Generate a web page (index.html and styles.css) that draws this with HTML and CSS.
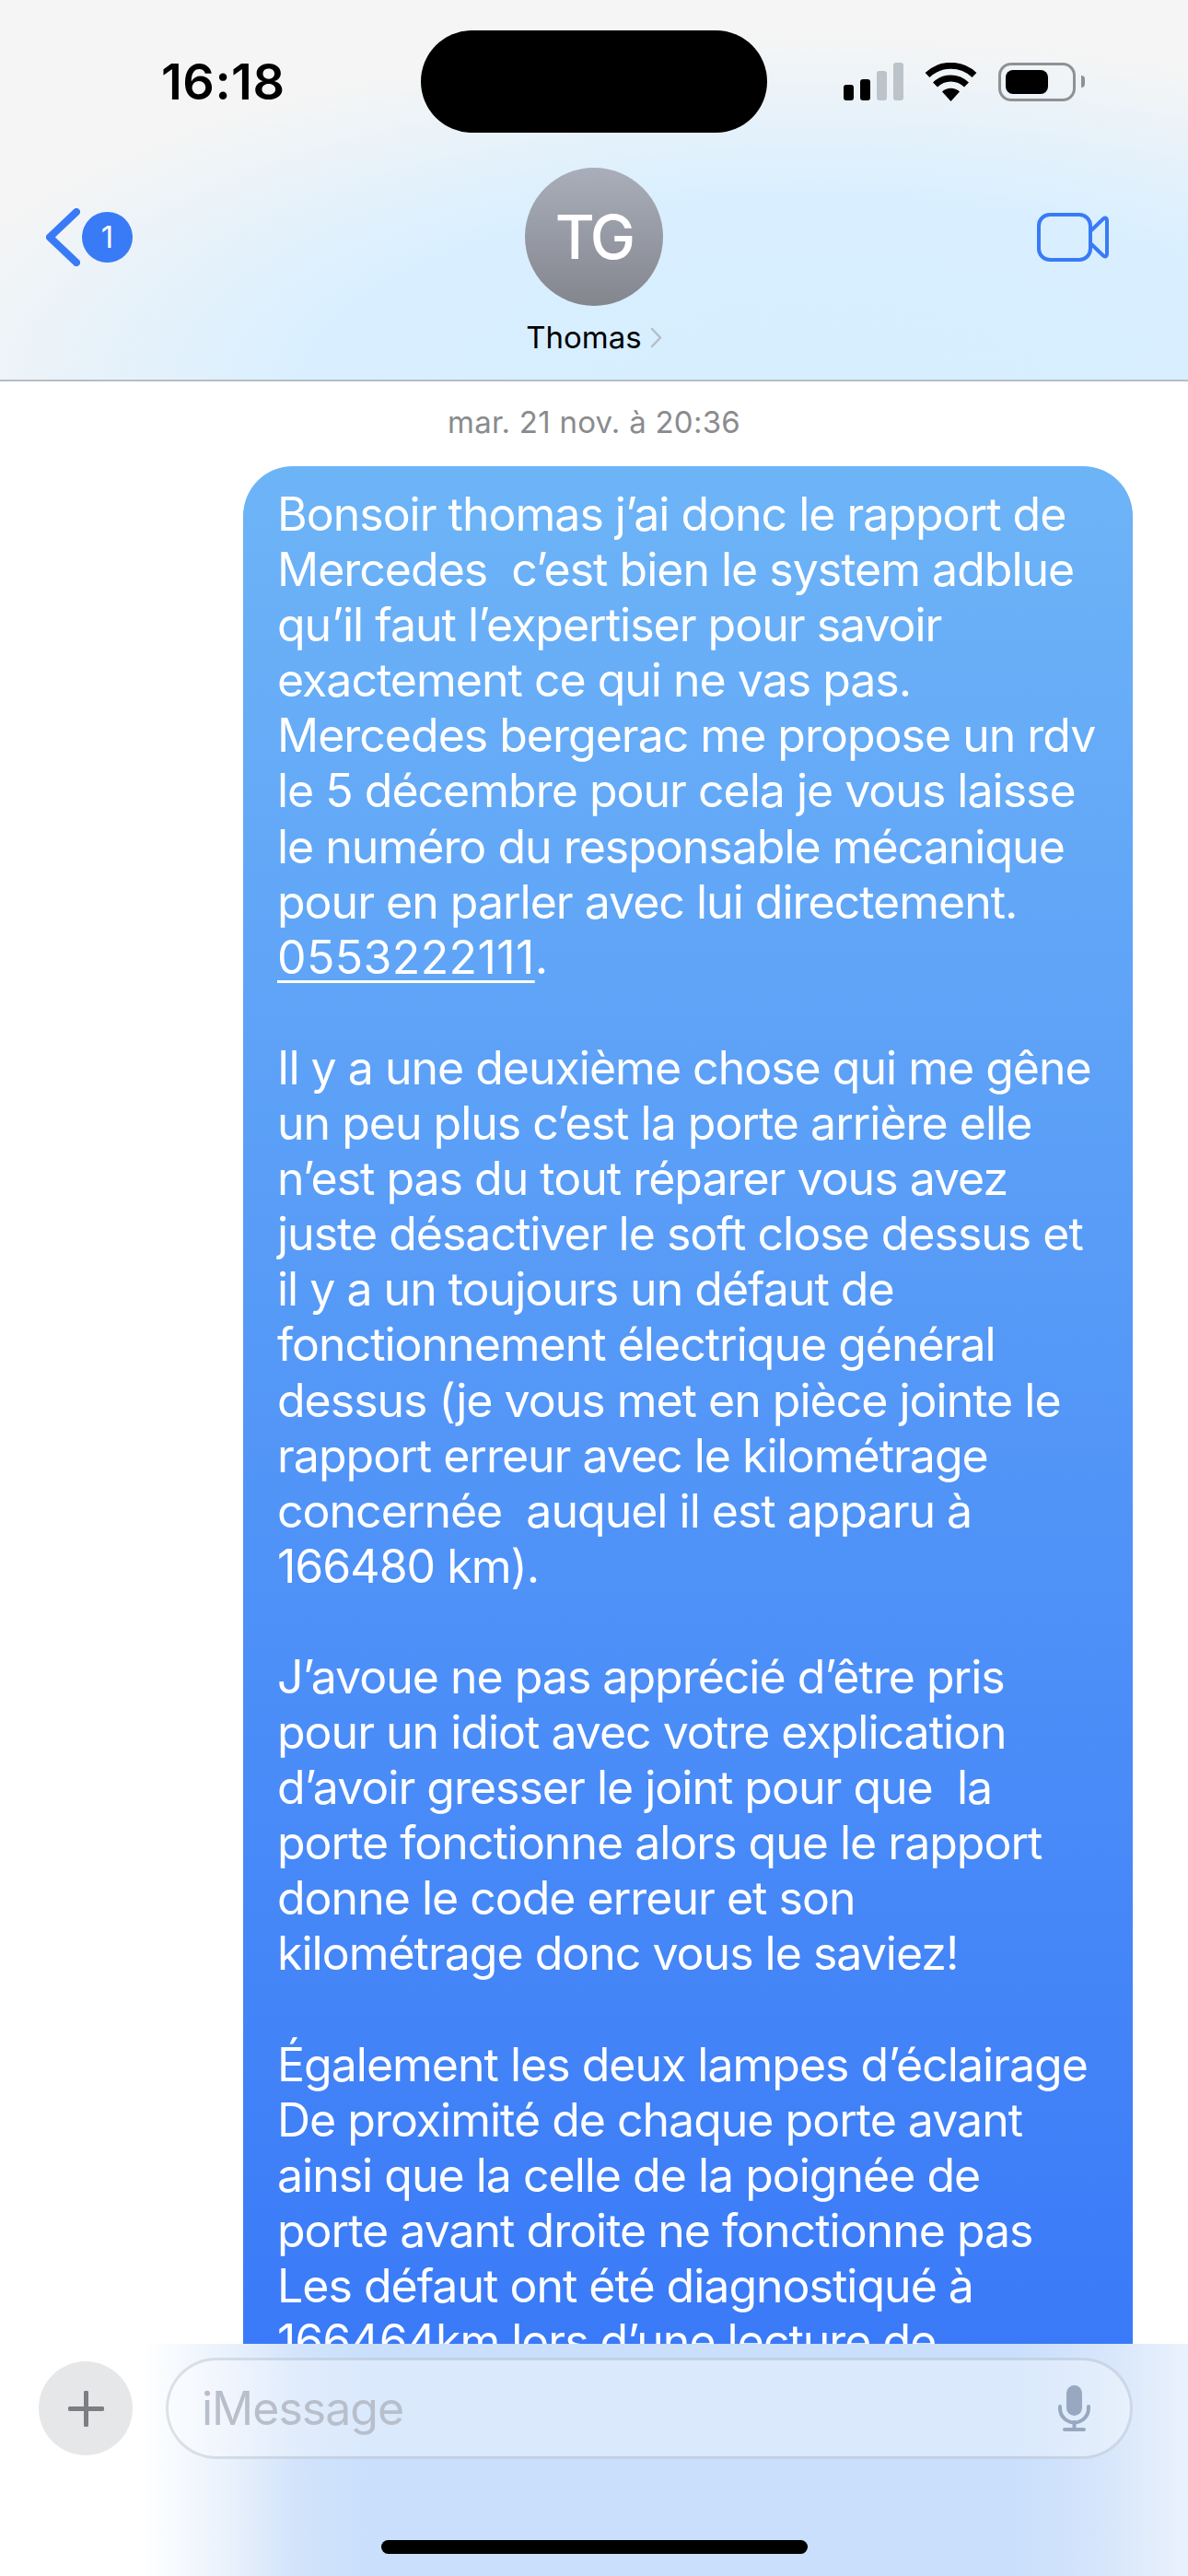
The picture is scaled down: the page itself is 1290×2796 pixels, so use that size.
FILE: index.html
```html
<!DOCTYPE html>
<html lang="fr">
<head>
    <meta charset="UTF-8">
    <meta name="viewport" content="width=device-width, initial-scale=1.0">
    <title>Thomas</title>
    <link rel="stylesheet" href="styles.css">
</head>
<body>
    <div class="phone">
        <header class="header">
            <div class="status">
                <span class="time">16:18</span>
                <div class="island"></div>
                <div class="status-icons">
                    <svg class="signal" width="65" height="41" viewBox="0 0 65 41">
                        <rect x="0" y="24" width="11" height="17" rx="3" fill="#000"/>
                        <rect x="18" y="18" width="11" height="23" rx="3" fill="#000"/>
                        <rect x="36" y="9" width="11" height="32" rx="3" fill="#bcc3c9"/>
                        <rect x="54" y="0" width="11" height="41" rx="3" fill="#bcc3c9"/>
                    </svg>
                    <svg class="wifi" width="57" height="42" viewBox="0 0 57 42">
                        <path d="M3 13.5A37 37 0 0 1 54 13.5" fill="none" stroke="#000" stroke-width="7"/>
                        <path d="M11.5 24A24 24 0 0 1 45.5 24" fill="none" stroke="#000" stroke-width="7"/>
                        <path d="M28.5 42L19 31.5A14 14 0 0 1 38 31.5Z" fill="#000"/>
                    </svg>
                    <div class="battery">
                        <div class="battery-level"></div>
                    </div>
                    <div class="battery-nub"></div>
                </div>
            </div>
            <div class="nav">
                <div class="back">
                    <svg width="37" height="63" viewBox="0 0 37 63">
                        <path d="M33 4L4 31.5L33 59" fill="none" stroke="#397bf6" stroke-width="8" stroke-linecap="round" stroke-linejoin="round"/>
                    </svg>
                    <span class="badge">1</span>
                </div>
                <div class="avatar">TG</div>
                <svg class="video" width="78" height="53" viewBox="0 0 78 53">
                    <rect x="2" y="2" width="56" height="49" rx="12" fill="none" stroke="#397bf6" stroke-width="4"/>
                    <path d="M58 20L72 6.5Q76 4 76 8.5V44.5Q76 49 72 46.5L58 33" fill="none" stroke="#397bf6" stroke-width="4" stroke-linejoin="round"/>
                </svg>
            </div>
            <div class="contact">
                <span class="contact-name">Thomas</span>
                <svg width="13" height="23" viewBox="0 0 13 23">
                    <path d="M2 2L11 11.5L2 21" fill="none" stroke="#b4bfc8" stroke-width="2.5" stroke-linecap="round"/>
                </svg>
            </div>
        </header>

        <main class="thread">
            <div class="date">mar. 21 nov. à 20:36</div>
            <div class="bubble">
                <p class="message">Bonsoir thomas j’ai donc le rapport de
Mercedes  c’est bien le system adblue
qu’il faut l’expertiser pour savoir
exactement ce qui ne vas pas.
Mercedes bergerac me propose un rdv
le 5 décembre pour cela je vous laisse
le numéro du responsable mécanique
pour en parler avec lui directement.
<a class="phone-link" href="#">0553222111</a>.

Il y a une deuxième chose qui me gêne
un peu plus c’est la porte arrière elle
n’est pas du tout réparer vous avez
juste désactiver le soft close dessus et
il y a un toujours un défaut de
fonctionnement électrique général
dessus (je vous met en pièce jointe le
rapport erreur avec le kilométrage
concernée  auquel il est apparu à
166480 km).

J’avoue ne pas apprécié d’être pris
pour un idiot avec votre explication
d’avoir gresser le joint pour que  la
porte fonctionne alors que le rapport
donne le code erreur et son
kilométrage donc vous le saviez!

Également les deux lampes d’éclairage
De proximité de chaque porte avant
ainsi que la celle de la poignée de
porte avant droite ne fonctionne pas
Les défaut ont été diagnostiqué à
166464km lors d’une lecture de</p>
            </div>
        </main>

        <footer class="composer">
            <div class="composer-row">
                <div class="plus">
                    <svg width="39" height="39" viewBox="0 0 39 39">
                        <path d="M19.5 2V37M2 19.5H37" fill="none" stroke="#7d7e83" stroke-width="5" stroke-linecap="round"/>
                    </svg>
                </div>
                <div class="field">
                    <span class="placeholder">iMessage</span>
                    <svg width="35" height="50" viewBox="0 0 35 50">
                        <rect x="9" y="0" width="17" height="33" rx="8.5" fill="#98a8c0"/>
                        <path d="M2 23V25A15.5 15.5 0 0 0 33 25V23" fill="none" stroke="#98a8c0" stroke-width="4" stroke-linecap="round"/>
                        <path d="M17.5 40V47M7 48H28" fill="none" stroke="#98a8c0" stroke-width="4" stroke-linecap="round"/>
                    </svg>
                </div>
            </div>
            <div class="home-bar"></div>
        </footer>
    </div>
</body>
</html>
```

FILE: styles.css
```css
* {
    box-sizing: border-box;
}

html, body {
    margin: 0;
    height: 100%;
}

body {
    font-family: Inter, "Liberation Sans", sans-serif;
    background: #fff;
}

.phone {
    position: relative;
    display: flex;
    flex-direction: column;
    height: 2796px;
    overflow: hidden;
}

/* header */
.header {
    flex: none;
    height: 414px;
    border-bottom: 2px solid #b3bec6;
    background:
        radial-gradient(ellipse 1000px 380px at 880px 420px, #d6eeff 0, #d9efff 55%, rgba(220, 240, 255, 0) 100%),
        #f5f5f5;
}

.status {
    display: grid;
    grid-template-columns: 457px 376px 1fr;
    align-items: center;
    height: 111px;
    margin: 33px 0 38px;
}

.time {
    padding-left: 175px;
    font-size: 54px;
    font-weight: 600;
    letter-spacing: 0.5px;
    color: #000;
}

.island {
    height: 111px;
    border-radius: 56px;
    background: #000;
}

.status-icons {
    display: flex;
    align-items: center;
    padding-left: 83px;
}

.signal {
    margin-right: 23px;
}

.wifi {
    margin-right: 23px;
}

.battery {
    width: 84px;
    height: 42px;
    padding: 5px;
    border: 3px solid #8f9194;
    border-radius: 14px;
}

.battery-level {
    width: 46px;
    height: 100%;
    border-radius: 8px;
    background: #000;
}

.battery-nub {
    width: 4px;
    height: 13px;
    margin-left: 6px;
    border-radius: 0 4px 4px 0;
    background: #8f9194;
}

.nav {
    display: grid;
    grid-template-columns: 1fr 150px 1fr;
    align-items: center;
    padding: 0 86px 0 50px;
}

.nav .avatar {
    margin-left: 18px;
}

.back {
    display: flex;
    align-items: center;
    gap: 2px;
}

.badge {
    display: flex;
    align-items: center;
    justify-content: center;
    width: 55px;
    height: 55px;
    border-radius: 50%;
    font-size: 33px;
    color: #fff;
    background: #397bf6;
}

.avatar {
    display: flex;
    align-items: center;
    justify-content: center;
    width: 150px;
    height: 150px;
    border-radius: 50%;
    font-size: 66px;
    font-weight: 500;
    letter-spacing: -3px;
    color: #fff;
    background: linear-gradient(#a9aeba, #84868e);
}

.video {
    justify-self: end;
}

.contact {
    display: flex;
    align-items: center;
    justify-content: center;
    gap: 9px;
    margin-top: 14px;
}

.contact-name {
    font-size: 33px;
    color: #000;
}

/* messages */
.thread {
    flex: 1;
    display: flex;
    flex-direction: column;
    min-height: 0;
}

.date {
    margin-top: 29px;
    height: 63px;
    font-size: 33px;
    line-height: 30px;
    letter-spacing: 0.25px;
    text-align: center;
    color: #8a8b8e;
}

.bubble {
    flex: 1;
    width: 966px;
    margin-left: 264px;
    padding: 22px 0 0 37px;
    border-radius: 54px 54px 0 0;
    background: linear-gradient(#6db4f7 0, #3a7af8 2037px);
}

.message {
    margin: 0;
    font-size: 50px;
    line-height: 60.1px;
    letter-spacing: -1px;
    white-space: pre;
    color: #fff;
}

.phone-link {
    color: #fff;
    letter-spacing: 0.4px;
    text-decoration: underline;
    text-decoration-thickness: 3px;
    text-underline-offset: 7px;
}

/* input bar, sits over the thread */
.composer {
    position: absolute;
    left: 0;
    right: 0;
    bottom: 0;
    height: 252px;
    padding-top: 15px;
    background: linear-gradient(90deg, #fff 0, #fff 155px, #e9f1fc 250px, #d3e4fb 320px, #c9dffb 400px, #c9dffb 1100px, #d5e5fb 1190px, #eaf2fc 1290px);
}

.composer-row {
    display: flex;
    align-items: center;
    gap: 36px;
    padding: 0 60px 0 42px;
}

.plus {
    display: flex;
    flex: none;
    align-items: center;
    justify-content: center;
    width: 102px;
    height: 102px;
    border-radius: 50%;
    background: #e6e7e9;
}

.field {
    flex: 1;
    display: flex;
    align-items: center;
    justify-content: space-between;
    height: 110px;
    padding: 0 43px 0 36px;
    border: 3px solid rgba(100, 115, 140, 0.2);
    border-radius: 55px;
    background: rgba(255, 255, 255, 0.32);
}

.placeholder {
    font-size: 50px;
    letter-spacing: -1px;
    color: #b8bfcb;
}

.home-bar {
    width: 463px;
    height: 15px;
    margin: 88px auto 0;
    border-radius: 8px;
    background: #000;
}
```
